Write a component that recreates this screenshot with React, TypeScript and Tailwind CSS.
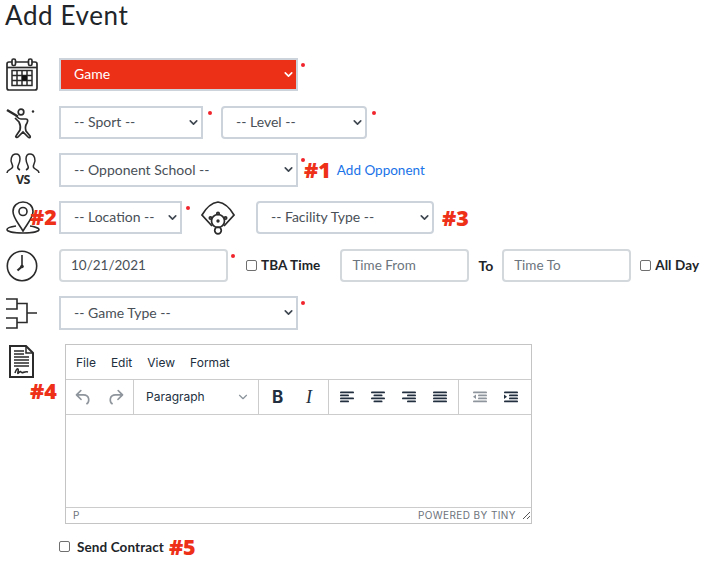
import { ChevronDown } from 'lucide-react';

const font = "font-['Lato','Liberation_Sans',sans-serif]";

// tiny red required dot that sits next to a control
function Req({ className = '' }: { className?: string }) {
  return <span className={`block w-[4px] h-[4px] rounded-full bg-[#f0242c] self-start mt-[5px] ${className}`} />;
}

function Note({ children, className = '' }: { children: string; className?: string }) {
  return (
    <span className={`font-['Open_Sans',sans-serif] font-extrabold text-[21.5px] leading-none text-[#ee3018] ${className}`}>
      {children}
    </span>
  );
}

function Select({ label, className = '', h = 'h-[33px]', rounded = '', red = false }: {
  label: string; className?: string; h?: string; rounded?: string; red?: boolean;
}) {
  return (
    <div className={`relative shrink-0 ${h} ${className}`}>
      <select
        defaultValue={label}
        className={`appearance-none w-full h-full border-2 ${rounded} pl-[13px] pb-[2px] text-[14px] outline-none ${
          red ? 'bg-[#ec3017] border-[#ccd3da] text-white' : 'bg-white border-[#ccd3da] text-[#495057]'
        }`}
      >
        <option>{label}</option>
      </select>
      <ChevronDown
        size={13}
        strokeWidth={3}
        className={`absolute right-[3px] top-[10px] pointer-events-none ${red ? 'text-white' : 'text-[#3f4750]'}`}
      />
    </div>
  );
}

function TextBox({ value, placeholder, className = '' }: { value?: string; placeholder?: string; className?: string }) {
  return (
    <input
      readOnly
      value={value}
      placeholder={placeholder}
      className={`shrink-0 h-[33px] border-2 border-[#d3d8dd] rounded-[4px] px-[10px] pb-[2px] text-[13.5px] text-[#495057] placeholder:text-[#6c757d] outline-none ${className}`}
    />
  );
}

function Check({ label, className = '' }: { label: string; className?: string }) {
  return (
    <label className={`flex items-center gap-[4px] shrink-0 ${className}`}>
      <span className="block w-[11px] h-[11px] border border-[#6f6f6f] rounded-[2px] bg-white" />
      <span className="text-[13.5px] font-bold text-[#212529] tracking-[0.1px]">{label}</span>
    </label>
  );
}

function Ic({ w = 38, h = 38, vb = '0 0 38 38', sw = 1.6, children }: { w?: number; h?: number; vb?: string; sw?: number; children: React.ReactNode }) {
  return (
    <svg width={w} height={h} viewBox={vb} fill="none" stroke="#2b2b2b" strokeWidth={sw}>
      {children}
    </svg>
  );
}

function CalendarIcon() {
  return (
    <Ic w={32} h={33} vb="0 0 32 33" sw={1.7}>
      <rect x="1" y="4" width="30" height="28" rx="2" />
      <line x1="1" y1="9.500" x2="31" y2="9.500" />
      <rect x="6" y="1" width="3.500" height="6.500" rx="1.500" fill="#fff" />
      <rect x="22.500" y="1" width="3.500" height="6.500" rx="1.500" fill="#fff" />
      <path d="M6 12.500h20v15H6z M6 17.500h20 M6 22.500h20 M11 12.500v15 M16 12.500v15 M21 12.500v15" strokeWidth="1.500" />
      <rect x="16" y="17.500" width="5" height="5" fill="#111" stroke="none" />
    </Ic>
  );
}

function BatterIcon() {
  return (
    <Ic w={34} h={32} vb="0 0 34 32" sw={1.7}>
      <circle cx="15" cy="5" r="2.800" />
      <circle cx="27" cy="4.500" r="1.200" fill="#2b2b2b" stroke="none" />
      <path d="M1 3l11 6.500" strokeWidth="2.400" />
      <path d="M10 9c2 2 3 3 5 3h5c2 0 2 2 1 4-2 3-2 5-1 8l4 5c1 2-1 2-2 1l-5-5-5 5c-1 1-3 0-2-1l4-6c1-3 0-6-1-8l-4-4" />
    </Ic>
  );
}

function VsIcon() {
  return (
    <div className="relative w-[34px] h-[34px]">
      <svg width="34" height="26" viewBox="0 0 34 26" fill="none" stroke="#2b2b2b" strokeWidth="1.500">
        <path d="M1 20c0-3 3-3 5-5 1-1 1-2 0-4-2-3-1-10 4-10 3 0 4 2 4 5 0 3-1 5-2 7-1 2 0 3 2 4" />
        <path d="M33 20c0-3-3-3-5-5-1-1-1-2 0-4 2-3 1-10-4-10-3 0-4 2-4 5 0 3 1 5 2 7 1 2 0 3-2 4" />
      </svg>
      <span className="absolute left-[10px] top-[21px] font-['Open_Sans',sans-serif] font-bold text-[12.5px] tracking-[-0.5px] leading-none text-[#2b2b2b]">VS</span>
    </div>
  );
}

function PinIcon() {
  return (
    <Ic w={34} h={33} vb="0 0 34 33">
      <path d="M10 25c-4 .6-9 2-9 3.500 0 2 7 3.500 16 3.500s16-1.500 16-3.500c0-1.500-5-3-9-3.500" />
      <path d="M17 30C13 23 7 17 7 10.500 7 5 11.500 1 17 1s10 4 10 9.500C27 17 21 23 17 30z" fill="#fff" />
      <circle cx="17" cy="10.500" r="4" />
    </Ic>
  );
}

function DiamondIcon() {
  return (
    <Ic w={34} h={34} vb="0 0 34 34" sw={1.7}>
      <path d="M11 25L1 14C5 7 10 2 17 1c7 1 12 6 16 13L23 25" />
      <circle cx="17" cy="20" r="6.500" />
      <circle cx="17" cy="20" r="1.700" fill="#2b2b2b" stroke="none" />
      <circle cx="9.500" cy="17" r="1.200" fill="#fff" />
      <circle cx="24.500" cy="17" r="1.200" fill="#fff" />
      <circle cx="17" cy="12.500" r="1.200" fill="#fff" />
      <circle cx="17" cy="29.500" r="3.300" />
    </Ic>
  );
}

function ClockIcon() {
  return (
    <Ic w={32} h={32} vb="0 0 32 32">
      <circle cx="16" cy="16" r="14.700" />
      <path d="M16 16.500V5" strokeWidth="1.600" />
      <path d="M16 16.500l-4.500 4" strokeWidth="2.200" />
      <circle cx="16" cy="16.500" r="1.800" fill="#2b2b2b" stroke="none" />
    </Ic>
  );
}

function BracketIcon() {
  return (
    <Ic w={32} h={32} vb="0 0 32 32">
      <path d="M0 2h11v10H0 M0 21h11v10H0 M11 6.500h10v19H11 M21 16h10" />
    </Ic>
  );
}

function ContractIcon() {
  return (
    <Ic w={25} h={33} vb="0 0 25 33" sw={2}>
      <path d="M1 1h16l7 7v24H1z" />
      <path d="M17 1v7h7" strokeWidth="1.500" />
      <path d="M5 6h10 M5 9h10 M5 12h15 M5 15h15 M5 18h15 M5 21h15" strokeWidth="1.400" />
      <path d="M6 28c2-6 4-5 3-1s2-2 3 0 3-1 7 0" strokeWidth="1.600" />
    </Ic>
  );
}

const tb = { fill: '#222f3e' };
const off = { fill: '#8f959c' };

function Undo({ style }: { style: { fill: string } }) {
  return (
    <svg width="21" height="21" viewBox="0 0 24 24" style={style}>
      <path d="M6.400 8H12c3.700 0 6.200 2 6.800 5.100.6 2.700-.4 5.600-2.300 6.800a1 1 0 0 1-1-1.800c1.100-.6 1.800-2.700 1.400-4.600-.5-2.100-2.100-3.500-4.900-3.500H6.400l3.300 3.300a1 1 0 1 1-1.400 1.400l-5-5a1 1 0 0 1 0-1.400l5-5a1 1 0 0 1 1.400 1.400L6.400 8Z" />
    </svg>
  );
}

function Redo({ style }: { style: { fill: string } }) {
  return (
    <svg width="21" height="21" viewBox="0 0 24 24" style={style}>
      <path d="M17.600 8H12c-3.700 0-6.200 2-6.800 5.100-.6 2.700.4 5.600 2.300 6.800a1 1 0 0 0 1-1.800c-1.100-.6-1.800-2.700-1.400-4.600.5-2.100 2.100-3.500 4.900-3.500h5.600l-3.300 3.300a1 1 0 1 0 1.400 1.400l5-5a1 1 0 0 0 0-1.400l-5-5a1 1 0 0 0-1.400 1.400L17.600 8Z" />
    </svg>
  );
}

// alignment icons are four bars, x/width per bar
function Lines({ bars }: { bars: [number, number][] }) {
  return (
    <svg width="24" height="24" viewBox="0 0 24 24" style={tb}>
      {bars.map(([x, w], i) => (
        <rect key={i} x={x} y={6.5 + i * 3} width={w} height="1.800" rx="0.900" />
      ))}
    </svg>
  );
}

function Outdent() {
  return (
    <svg width="24" height="24" viewBox="0 0 24 24" style={off}>
      <rect x="5" y="6.500" width="14" height="1.800" rx="0.900" />
      <rect x="10" y="9.500" width="9" height="1.800" rx="0.900" />
      <rect x="10" y="12.500" width="9" height="1.800" rx="0.900" />
      <rect x="5" y="15.500" width="14" height="1.800" rx="0.900" />
      <path d="M8 9.500v4.500l-3-2.200z" />
    </svg>
  );
}

function Indent() {
  return (
    <svg width="24" height="24" viewBox="0 0 24 24" style={tb}>
      <rect x="5" y="6.500" width="14" height="1.800" rx="0.900" />
      <rect x="10" y="9.500" width="9" height="1.800" rx="0.900" />
      <rect x="10" y="12.500" width="9" height="1.800" rx="0.900" />
      <rect x="5" y="15.500" width="14" height="1.800" rx="0.900" />
      <path d="M5 9.500v4.500l3-2.200z" />
    </svg>
  );
}

function Editor() {
  return (
    <div className="w-[467px] h-[180px] border border-[#c4c4c4] flex flex-col font-['Inter',sans-serif] text-[#222f3e]">
      <div className="h-[35px] shrink-0 flex items-center pl-[10px] pt-[1px] gap-[15px] text-[12px] border-b border-[#cccccc]">
        <span>File</span>
        <span>Edit</span>
        <span>View</span>
        <span>Format</span>
      </div>
      <div className="h-[35px] shrink-0 flex items-center border-b border-[#cccccc]">
        <div className="w-[68px] h-full flex items-center justify-center gap-[11px] border-r border-[#cccccc] shrink-0">
          <Undo style={off} />
          <Redo style={off} />
        </div>
        <div className="w-[125px] h-full flex items-center justify-between pl-[12px] pr-[8px] border-r border-[#cccccc] shrink-0 text-[12px]">
          <span>Paragraph</span>
          <ChevronDown size={14} className="text-[#8a929b]" />
        </div>
        <div className="w-[70px] h-full flex items-center border-r border-[#cccccc] shrink-0 pl-[13px] gap-[20px]">
          <span className="font-bold text-[17px] leading-none w-[14px]">B</span>
          <span className="font-['Liberation_Serif',serif] italic text-[18px] leading-none">I</span>
        </div>
        <div className="w-[130px] h-full flex items-center justify-center gap-[7px] border-r border-[#cccccc] shrink-0">
          <Lines bars={[[5, 14], [5, 9], [5, 14], [5, 9]]} />
          <Lines bars={[[5, 14], [7.5, 9], [5, 14], [7.5, 9]]} />
          <Lines bars={[[5, 14], [10, 9], [5, 14], [10, 9]]} />
          <Lines bars={[[5, 14], [5, 14], [5, 14], [5, 14]]} />
        </div>
        <div className="flex-1 h-full flex items-center justify-center gap-[7px]">
          <Outdent />
          <Indent />
        </div>
      </div>
      <div className="flex-1" />
      <div className="h-[16px] shrink-0 border-t border-[#cccccc] flex items-center justify-between pl-[7px] text-[10px] tracking-[0.4px] text-[#6d737b]">
        <span>P</span>
        <div className="flex items-center gap-[6px]">
          <span>POWERED BY TINY</span>
          <svg width="9" height="9" viewBox="0 0 9 9" stroke="#555" strokeWidth="1" fill="none">
            <path d="M1 8l7-7 M5 8l3-3" />
          </svg>
        </div>
      </div>
    </div>
  );
}

export default function App() {
  return (
    <div className={`w-[704px] h-[562px] bg-white relative overflow-hidden ${font}`}>
      <h1 className="h-[58px] pl-[5px] text-[26px] leading-[30px] tracking-[0.6px] text-[#212529]">Add Event</h1>

      <div className="flex flex-col pl-[6px]">
        <div className="flex items-center h-[33px]">
          <div className="w-[53px] shrink-0"><CalendarIcon /></div>
          <Select label="Game" red className="w-[239px]" />
          <Req className="ml-[3px]" />
        </div>

        <div className="flex items-center h-[33px] mt-[15px]">
          <div className="w-[53px] shrink-0"><BatterIcon /></div>
          <Select label="-- Sport --" className="w-[144px]" />
          <Req className="ml-[5px]" />
          <Select label="-- Level --" rounded="rounded-[4px]" className="w-[146px] ml-[9px]" />
          <Req className="ml-[5px]" />
        </div>

        <div className="flex items-center h-[34px] mt-[14px]">
          <div className="w-[53px] shrink-0"><VsIcon /></div>
          <Select label="-- Opponent School --" h="h-[34px]" className="w-[239px]" />
          <Req className="ml-[3px] mr-[-1px]" />
          <Note>#1</Note>
          <span className="ml-[6px] text-[13.5px] text-[#1a73e8]">Add Opponent</span>
        </div>

        <div className="flex items-center h-[33px] mt-[14px]">
          <div className="w-[53px] shrink-0 relative">
            <PinIcon />
            <Note className="absolute left-[24px] top-[5px]">#2</Note>
          </div>
          <Select label="-- Location --" className="w-[123px]" />
          <Req className="ml-[4px]" />
          <div className="ml-[11px] shrink-0"><DiamondIcon /></div>
          <Select label="-- Facility Type --" rounded="rounded-[4px]" className="w-[178px] ml-[21px]" />
          <Note className="ml-[8px]">#3</Note>
        </div>

        <div className="flex items-center h-[33px] mt-[15px]">
          <div className="w-[53px] shrink-0"><ClockIcon /></div>
          <TextBox value="10/21/2021" className="w-[169px]" />
          <Req className="ml-[3px]" />
          <Check label="TBA Time" className="ml-[11px]" />
          <TextBox placeholder="Time From" className="w-[129px] ml-[20px]" />
          <span className="ml-[9px] text-[14px] font-bold text-[#212529]">To</span>
          <TextBox placeholder="Time To" className="w-[129px] ml-[9px]" />
          <Check label="All Day" className="ml-[9px]" />
        </div>

        <div className="flex items-center h-[34px] mt-[14px]">
          <div className="w-[53px] shrink-0"><BracketIcon /></div>
          <Select label="-- Game Type --" h="h-[34px]" className="w-[239px]" />
          <Req className="ml-[3px]" />
        </div>

        <div className="flex mt-[14px]">
          <div className="w-[59px] shrink-0 relative pl-[3px] pt-[1px]">
            <ContractIcon />
            <Note className="absolute left-[24px] top-[36px]">#4</Note>
          </div>
          <Editor />
        </div>

        <div className="flex items-center mt-[12px] pl-[53px]">
          <Check label="Send Contract" className="gap-[7px]" />
          <Note className="ml-[5px]">#5</Note>
        </div>
      </div>
    </div>
  );
}
